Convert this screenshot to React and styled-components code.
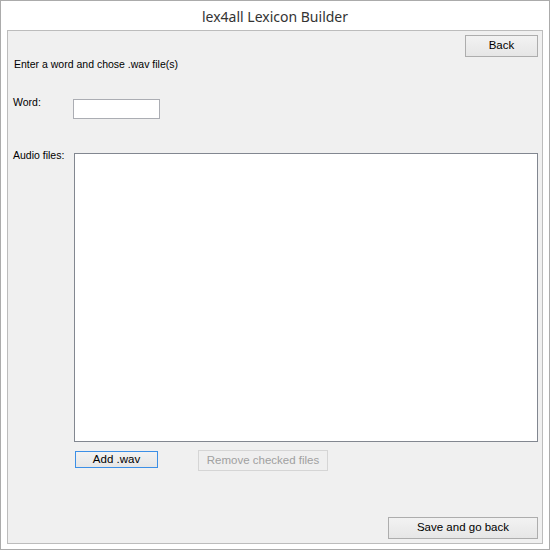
import React from 'react';
import styled, { createGlobalStyle } from 'styled-components';

const Global = createGlobalStyle`
  html, body {
    margin     : 0;
    padding    : 0;
    background : #ffffff;
  }
`;

const Window = styled.div`
  box-sizing     : border-box;
  width          : 550px;
  height         : 550px;
  border         : 1px solid #ababab;
  background     : #ffffff;
  display        : flex;
  flex-direction : column;
`;

const TitleBar = styled.div`
  box-sizing      : border-box;
  height          : 29px;
  display         : flex;
  align-items     : center;
  justify-content : center;
  font-family     : "Noto Sans", "Open Sans", sans-serif;
  font-size       : 14px;
  color           : #333333;
  padding-top     : 2px;
`;

const Client = styled.div`
  box-sizing     : border-box;
  margin         : 0 6px 5px 6px;
  height         : 514px;
  border         : 1px solid #bcbcbc;
  background     : #f0f0f0;
  display        : flex;
  flex-direction : column;
  font-family    : "Liberation Sans", Arial, sans-serif;
  font-size      : 10.5px;
  color          : #000000;
`;

const TopRow = styled.div`
  display         : flex;
  justify-content : flex-end;
  padding         : 4px 4px 0 0;
`;

const Button = styled.button`
  box-sizing  : border-box;
  display     : block;
  width       : ${p => p.$w}px;
  height      : ${p => p.$h || 22}px;
  margin      : 0;
  padding     : 0;
  font-family : "Liberation Sans", Arial, sans-serif;
  font-size   : 11.5px;
  color       : ${p => (p.disabled ? '#a0a0a0' : '#000000')};
  border      : 1px solid ${p => (p.$focus ? '#3c8fe6' : p.disabled ? '#d5d5d5' : '#adadad')};
  background  : ${p => (p.disabled ? '#efefef' : 'linear-gradient(#f2f2f2, #e6e6e6)')};
  line-height : 1;
`;

const Intro = styled.div`
  line-height : 13px;
  padding-left: 6px;
  margin-top  : 1px;
`;

const FieldRow = styled.div`
  display     : flex;
  align-items : flex-start;
  padding-left: 5px;
  margin-top  : ${p => p.$top}px;
`;

const Label = styled.div`
  width       : ${p => p.$w}px;
  line-height : 13px;
  flex-shrink : 0;
`;

const TextBox = styled.input`
  box-sizing  : border-box;
  width       : 87px;
  height      : 20px;
  margin      : 3px 0 0 0;
  border      : 1px solid #abadb3;
  background  : #ffffff;
  outline     : none;
`;

const ListBox = styled.div`
  box-sizing  : border-box;
  width       : 464px;
  height      : 289px;
  margin-top  : 4px;
  border      : 1px solid #828790;
  background  : #ffffff;
`;

const ButtonRow = styled.div`
  display     : flex;
  align-items : flex-start;
  gap         : 40px;
  padding-left: 67px;
  margin-top  : 8px;
`;

const BottomRow = styled.div`
  display         : flex;
  justify-content : flex-end;
  padding-right   : 4px;
  margin-top      : 46px;
`;

export default function App() {
  return (
    <>
      <Global />
      <Window>
        <TitleBar>lex4all Lexicon Builder</TitleBar>
        <Client>
          <TopRow>
            <Button $w={73}>Back</Button>
          </TopRow>
          <Intro>Enter a word and chose .wav file(s)</Intro>
          <FieldRow $top={25}>
            <Label $w={60}>Word:</Label>
            <TextBox type="text" />
          </FieldRow>
          <FieldRow $top={30}>
            <Label $w={61}>Audio files:</Label>
            <ListBox />
          </FieldRow>
          <ButtonRow>
            <Button $w={83} $h={17} $focus style={{ marginTop: 1 }}>Add .wav</Button>
            <Button $w={130} $h={21} disabled>Remove checked files</Button>
          </ButtonRow>
          <BottomRow>
            <Button $w={150}>Save and go back</Button>
          </BottomRow>
        </Client>
      </Window>
    </>
  );
}
